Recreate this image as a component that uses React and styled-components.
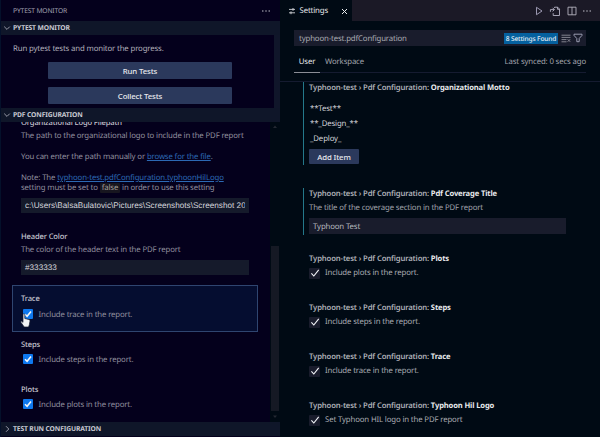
import React from 'react';
import styled, { createGlobalStyle, css } from 'styled-components';

const Global = createGlobalStyle`
  * { box-sizing: border-box; }
  html, body { margin: 0; padding: 0; background: #000a14; }
  body {
    overflow: hidden;
    font-family: 'Noto Sans', 'Open Sans', sans-serif;
    font-size: 7.8px;
    letter-spacing: -0.14px;
    line-height: 10px;
    white-space: nowrap;
    color: #b4b4c0;
    text-rendering: geometricPrecision;
  }
`;

const Window = styled.div`
  display: grid;
  grid-template-columns: 280px 320px;
  width: 600px;
  height: 437px;
  overflow: hidden;
`;

/* ---------- side bar ---------- */
const SideBar = styled.aside`
  display: flex;
  flex-direction: column;
  height: 437px;
  background: #04001c;
  border-left: 1px solid #04102a;
  overflow: hidden;
`;
const SideTitle = styled.div`
  display: flex;
  align-items: center;
  justify-content: space-between;
  height: 21px;
  padding: 1px 9px 0 12px;
  font-size: 6.7px;
  color: #a3a2b0;
`;
const SectionHeader = styled.div`
  display: flex;
  align-items: center;
  flex: none;
  height: 14px;
  padding-left: 2px;
  gap: 2px;
  background: #0f1629;
  color: #c9cad3;
  font-size: 6.75px;
  font-weight: 700;
`;
const MonitorBody = styled.div`
  display: flex;
  flex-direction: column;
  height: 73px;
  padding: 9px 42px 0 12px;
  border-right: 6px solid #10162a;
`;
const MonitorText = styled.div`
  height: 18px;
  color: #b0afba;
`;
const Button = styled.button`
  display: flex;
  align-items: center;
  justify-content: center;
  height: ${(p) => (p.$small ? 15 : 17)}px;
  width: ${(p) => (p.$small ? 50 : 184)}px;
  margin: 0;
  padding: 0;
  border: 0;
  border-radius: 1px;
  background: #2b395c;
  color: #e8e9ee;
  font: inherit;
  font-weight: 500;
  letter-spacing: inherit;
`;
const ButtonStack = styled.div`
  display: flex;
  flex-direction: column;
  align-items: flex-end;
  gap: 8px;
  width: 219px;
`;
const ConfigBody = styled.div`
  display: grid;
  grid-template-columns: 269px 10px;
  height: 300px;
  overflow: hidden;
`;
const ConfigList = styled.div`
  display: flex;
  flex-direction: column;
  height: 300px;
  padding-left: 11px;
  overflow: hidden;
`;
const Setting = styled.section`
  flex: none;
  width: 246px;
  height: ${(p) => p.$h}px;
  padding: ${(p) => p.$top || 0}px 0 0 8px;
  border: 1px solid transparent;
  ${(p) =>
    p.$selected &&
    css`
      background: #050d30;
      border-color: #2f4570;
    `}
`;
const FirstSetting = styled(Setting)`
  margin-top: -5px;
`;
const Name = styled.div`
  height: ${(p) => p.$h || 13}px;
  color: #c6c6d0;
  font-weight: 500;
  font-size: 7.6px;
`;
const Desc = styled.p`
  margin: 0 0 ${(p) => p.$gap || 0}px;
  color: #918f9e;
`;
const Link = styled.span`
  color: #2c69b4;
  text-decoration: underline;
  text-underline-offset: 1px;
  text-decoration-thickness: 1px;
`;
const Code = styled.code`
  padding: 0 2px;
  border-radius: 1px;
  background: #17161f;
  color: #a59f9a;
  font: inherit;
`;
const Field = styled.div`
  display: flex;
  align-items: center;
  width: 228px;
  height: 15px;
  padding: 0 4px;
  background: #151a2b;
  color: #d6d7dd;
  font-family: 'Liberation Sans', Arial, sans-serif;
  font-size: 8.2px;
  letter-spacing: 0;
`;
const FieldText = styled.span`
  overflow: hidden;
`;
const CheckRow = styled.label`
  display: flex;
  align-items: center;
  gap: ${(p) => (p.$flat ? 5 : 5.5)}px;
  height: 12px;
  padding-left: ${(p) => (p.$flat ? 0 : 2)}px;
  color: ${(p) => (p.$flat ? '#a9abb2' : '#918f9e')};
`;
const Box = styled.span`
  display: flex;
  flex: none;
  align-items: center;
  justify-content: center;
  width: ${(p) => (p.$flat ? 11 : 10)}px;
  height: ${(p) => (p.$flat ? 11 : 10)}px;
  margin-bottom: ${(p) => (p.$flat ? 0 : 2)}px;
  border-radius: 1px;
  background: ${(p) => (p.$flat ? '#191c2c' : '#0e78ef')};
`;
const ScrollTrack = styled.div`
  display: flex;
  flex-direction: column;
  align-items: center;
  justify-content: space-between;
  padding: 3px 0 3px;
  background: #000a14;
`;
const Thumb = styled.div`
  width: 8px;
  height: 165px;
  margin: auto 0 4px;
  background: #151924;
`;
const Cursor = styled.svg`
  position: absolute;
  left: 20px;
  top: 313px;
`;

/* ---------- editor ---------- */
const Editor = styled.main`
  display: flex;
  flex-direction: column;
  height: 437px;
  background: #000a14;
  overflow: hidden;
`;
const TabBar = styled.div`
  display: flex;
  flex: none;
  height: 21px;
  background: #1b1926;
`;
const Tab = styled.div`
  display: flex;
  align-items: center;
  width: 72px;
  padding: 1px 4px 0 8px;
  background: #000a14;
  color: #e6e7ea;
`;
const TabLabel = styled.span`
  flex: 1;
  padding-left: 3.5px;
`;
const Actions = styled.div`
  display: flex;
  flex: 1;
  align-items: center;
  justify-content: flex-end;
  gap: 5.5px;
  padding: 1px 8px 0 0;
`;
const SearchBox = styled.div`
  display: flex;
  flex: none;
  align-items: center;
  width: 292px;
  height: 16px;
  margin: 9px 0 0 14px;
  padding: 0 2px 0 5px;
  background: #191c2c;
  color: #a9abb2;
`;
const Query = styled.span`
  flex: 1;
  padding-top: 1px;
`;
const Badge = styled.span`
  height: 11px;
  width: 54px;
  margin-right: 3px;
  text-align: center;
  background: #05609e;
  color: #e6edf3;
  font-size: 6.6px;
  font-weight: 500;
  line-height: 11px;
`;
const ScopeBar = styled.div`
  display: flex;
  flex: none;
  width: 292px;
  height: 27px;
  margin: 0 0 8px 14px;
  border-bottom: 1px solid #151b30;
  line-height: 32px;
`;
const Scope = styled.span`
  height: 27px;
  width: ${(p) => p.$w}px;
  text-align: center;
  color: ${(p) => (p.$active ? '#e6e7ea' : '#a1a3ab')};
  border-bottom: 1px solid ${(p) => (p.$active ? '#8b8d96' : 'transparent')};
`;
const Synced = styled.span`
  margin-left: auto;
  color: #a1a3ab;
`;
const SettingsList = styled.div`
  flex: 1;
  padding-left: 23px;
  border-top: 1px solid #151b30;
  overflow: hidden;
`;
const Entry = styled.section`
  height: ${(p) => p.$h}px;
  margin-bottom: ${(p) => p.$gap || 0}px;
  padding: 1px 0 0 5px;
  border-left: 1px solid ${(p) => (p.$modified ? '#24788a' : 'transparent')};
`;
const EntryTitle = styled.div`
  height: ${(p) => p.$h || 14}px;
  color: #adafb6;
  font-weight: 600;
  font-size: 7.7px;
`;
const Strong = styled.b`
  color: #e8e9ec;
  font-weight: 700;
  font-size: 7.6px;
`;
const Item = styled.div`
  height: 15px;
  padding-left: 1px;
  color: #d2d3d8;
`;
const EntryInput = styled.div`
  display: flex;
  align-items: center;
  width: 257px;
  height: 16px;
  margin-top: 5px;
  padding: 1px 0 0 4px;
  background: #191c2c;
  color: #b6b8be;
`;
const EntryDesc = styled.div`
  color: #a1a3ab;
`;

const Chevron = ({ right }) => (
  <svg width="8" height="8" viewBox="0 0 8 8" fill="none" stroke="#b9bac6" strokeWidth="0.8">
    <path d={right ? 'M3 1.2 5.8 4 3 6.8' : 'M1.2 2.6 4 5.4 6.8 2.6'} />
  </svg>
);
const Dots = () => (
  <svg width="10" height="4" viewBox="0 0 10 4" fill="#b4b3be">
    <circle cx="1.8" cy="2" r=".75" />
    <circle cx="5" cy="2" r=".75" />
    <circle cx="8.2" cy="2" r=".75" />
  </svg>
);
const Arrow = ({ down }) => (
  <svg width="6" height="4" viewBox="0 0 6 4" fill="#242933">
    <path d={down ? 'M1 .5h4L3 3z' : 'M1 3h4L3 .5z'} />
  </svg>
);

function Check({ flat, children }) {
  return (
    <CheckRow $flat={flat}>
      <Box $flat={flat}>
        <svg width="10" height="10" viewBox="0 0 10 10" fill="none" stroke="#f4f6fa" strokeWidth={flat ? 1.1 : 1.6}>
          <path d={flat ? 'M1.4 5.4 3.8 8 8.7 1.9' : 'M2 5.2 4.1 7.3 8 2.6'} />
        </svg>
      </Box>
      <span>{children}</span>
    </CheckRow>
  );
}

function EntryName({ h, children }) {
  return (
    <EntryTitle $h={h}>
      Typhoon-test › Pdf Configuration: <Strong>{children}</Strong>
    </EntryTitle>
  );
}

const toggles = [
  ['Plots', 'Include plots in the report.'],
  ['Steps', 'Include steps in the report.'],
  ['Trace', 'Include trace in the report.'],
  ['Typhoon Hil Logo', 'Set Typhoon HIL logo in the PDF report'],
];

export default function App() {
  return (
    <Window>
      <Global />
      <SideBar>
        <SideTitle>
          <span>PYTEST MONITOR</span>
          <Dots />
        </SideTitle>
        <SectionHeader>
          <Chevron />
          PYTEST MONITOR
        </SectionHeader>
        <MonitorBody>
          <MonitorText>Run pytest tests and monitor the progress.</MonitorText>
          <ButtonStack>
            <Button>Run Tests</Button>
            <Button>Collect Tests</Button>
          </ButtonStack>
        </MonitorBody>
        <SectionHeader>
          <Chevron />
          PDF CONFIGURATION
        </SectionHeader>
        <ConfigBody>
          <ConfigList>
            <FirstSetting $h={109}>
              <Name>Organizational Logo Filepath</Name>
              <Desc $gap={11}>The path to the organizational logo to include in the PDF report</Desc>
              <Desc $gap={11}>
                You can enter the path manually or <Link>browse for the file</Link>.
              </Desc>
              <Desc $gap={5}>
                Note: The <Link>typhoon-test.pdfConfiguration.typhoonHilLogo</Link>
                <br />
                setting must be set to <Code>false</Code> in order to use this setting
              </Desc>
              <Field>
                <FieldText>c:\Users\BalsaBulatovic\Pictures\Screenshots\Screenshot 20</FieldText>
              </Field>
            </FirstSetting>
            <Setting $h={59} $top={5}>
              <Name>Header Color</Name>
              <Desc $gap={5}>The color of the header text in the PDF report</Desc>
              <Field>#333333</Field>
            </Setting>
            <Setting $h={47} $top={8} $selected>
              <Name $h={15}>Trace</Name>
              <Check>Include trace in the report.</Check>
            </Setting>
            <Setting $h={45} $top={7}>
              <Name $h={14}>Steps</Name>
              <Check>Include steps in the report.</Check>
            </Setting>
            <Setting $h={45} $top={7}>
              <Name $h={14}>Plots</Name>
              <Check>Include plots in the report.</Check>
            </Setting>
          </ConfigList>
          <ScrollTrack>
            <Arrow />
            <Thumb />
            <Arrow down />
          </ScrollTrack>
        </ConfigBody>
        <SectionHeader>
          <Chevron right />
          TEST RUN CONFIGURATION
        </SectionHeader>
      </SideBar>

      <Editor>
        <TabBar>
          <Tab>
            <svg width="8" height="8" viewBox="0 0 8 8" fill="none" stroke="#d4d6da" strokeWidth=".9">
              <path d="M1 2.4h6M1 5.8h6M5 1v2.8M3 4.4v2.8" />
            </svg>
            <TabLabel>Settings</TabLabel>
            <svg width="7" height="7" viewBox="0 0 7 7" stroke="#eceef0" strokeWidth="1">
              <path d="M1 1l5 5M6 1 1 6" />
            </svg>
          </Tab>
          <Actions>
            <svg width="10" height="10" viewBox="0 0 10 10" fill="none" stroke="#a9a6c0" strokeWidth=".9">
              <path d="M2.5 1.3v7.4L8 5z" />
            </svg>
            <svg width="12" height="11" viewBox="0 0 12 11" fill="none" stroke="#b5b3c4" strokeWidth=".9">
              <path d="M5.5 2V1.2h3.2l1.8 1.9v6.4H4.2V7.2M8.5 1.2v2.1h2M1.4 5.8V3.6h3.8M3.6 1.8l1.8 1.8-1.8 1.8" />
            </svg>
            <svg width="10" height="10" viewBox="0 0 10 10" fill="none" stroke="#b5b3c0" strokeWidth=".9">
              <path d="M1 1.2h8v7.6H1zM5 1.2v7.6" />
            </svg>
            <Dots />
          </Actions>
        </TabBar>
        <SearchBox>
          <Query>typhoon-test.pdfConfiguration</Query>
          <Badge>8 Settings Found</Badge>
          <svg width="10" height="9" viewBox="0 0 10 9" fill="none" stroke="#8e909b" strokeWidth=".9">
            <path d="M.5 1.2h9M.5 3.4h9M.5 5.6h5M.5 7.8h5M6.6 5.2l2.6 2.6M9.2 5.2 6.6 7.8" />
          </svg>
          <svg width="13" height="10" viewBox="0 0 13 10" fill="none" stroke="#a7a9c0" strokeWidth=".9">
            <path d="M3 1.2h8v1.2L8.2 5.5v3.2H5.8V5.5L3 2.4z" />
          </svg>
        </SearchBox>
        <ScopeBar>
          <Scope $w={26} $active>
            User
          </Scope>
          <Scope $w={49}>Workspace</Scope>
          <Synced>Last synced: 0 secs ago</Synced>
        </ScopeBar>
        <SettingsList>
          <Entry $h={83} $gap={23} $modified>
            <EntryName h={21}>Organizational Motto</EntryName>
            <Item>**Test**</Item>
            <Item>**_Design_**</Item>
            <Item>_Deploy_</Item>
            <Button $small>Add Item</Button>
          </Entry>
          <Entry $h={47} $gap={18} $modified>
            <EntryName>Pdf Coverage Title</EntryName>
            <EntryDesc>The title of the coverage section in the PDF report</EntryDesc>
            <EntryInput>Typhoon Test</EntryInput>
          </Entry>
          {toggles.map(([name, text]) => (
            <Entry key={name} $h={49}>
              <EntryName h={13}>{name}</EntryName>
              <Check flat>{text}</Check>
            </Entry>
          ))}
        </SettingsList>
      </Editor>
      <Cursor width="11" height="15" viewBox="0 0 11 15">
        <path
          d="M3 1.5c0-1 1.8-1 1.8 0v4l4 .9c1 .3 1.3.8 1.2 1.7l-.6 3.4-.8 2.5H4.2L1 9.4C.4 8.4 1.5 7.8 2.2 8.6L3 9.4z"
          fill="#f2f3f6"
          stroke="#14182c"
          strokeWidth=".7"
        />
      </Cursor>
    </Window>
  );
}
